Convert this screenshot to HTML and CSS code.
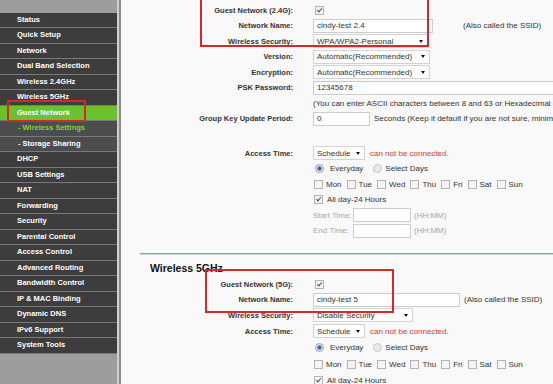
FILE: index.html
```html
<html lang="en">
<head>
    <meta charset="UTF-8">
    <meta name="viewport" content="width=device-width, initial-scale=1.0">
    <title>Guest Network</title>
    <link rel="stylesheet" href="styles.css">
</head>
<body>
  <div class="page">
    <nav class="menu">
      <ul>
        <li>Status</li>
        <li>Quick Setup</li>
        <li>Network</li>
        <li>Dual Band Selection</li>
        <li>Wireless 2.4GHz</li>
        <li>Wireless 5GHz</li>
        <li class="active">Guest Network</li>
        <li class="sub current">- Wireless Settings</li>
        <li class="sub">- Storage Sharing</li>
        <li>DHCP</li>
        <li>USB Settings</li>
        <li>NAT</li>
        <li>Forwarding</li>
        <li>Security</li>
        <li>Parental Control</li>
        <li>Access Control</li>
        <li>Advanced Routing</li>
        <li>Bandwidth Control</li>
        <li>IP &amp; MAC Binding</li>
        <li>Dynamic DNS</li>
        <li>IPv6 Support</li>
        <li>System Tools</li>
      </ul>
    </nav>
    <div class="edge"></div>

    <main class="content">
      <div class="row">
        <span class="label">Guest Network (2.4G):</span>
        <span class="value"><span class="check on first"></span></span>
      </div>
      <div class="row">
        <span class="label">Network Name:</span>
        <span class="value"><span class="input nameBox">cindy-test 2.4</span><span class="note">(Also called the SSID)</span></span>
      </div>
      <div class="row">
        <span class="label">Wireless Security:</span>
        <span class="value"><span class="select wpa">WPA/WPA2-Personal<i class="arrow"></i></span></span>
      </div>
      <div class="row">
        <span class="label">Version:</span>
        <span class="value"><span class="select auto">Automatic(Recommended)<i class="arrow"></i></span></span>
      </div>
      <div class="row">
        <span class="label">Encryption:</span>
        <span class="value"><span class="select auto">Automatic(Recommended)<i class="arrow"></i></span></span>
      </div>
      <div class="row">
        <span class="label">PSK Password:</span>
        <span class="value"><span class="input pskBox">12345678</span></span>
      </div>
      <div class="row">
        <span class="label"></span>
        <span class="value">(You can enter ASCII characters between 8 and 63 or Hexadecimal characters between 8 and 64.)</span>
      </div>
      <div class="row">
        <span class="label">Group Key Update Period:</span>
        <span class="value"><span class="input keyBox">0</span><span class="note near">Seconds (Keep it default if you are not sure, minimum is 30, 0 means no update)</span></span>
      </div>

      <div class="row spaced">
        <span class="label">Access Time:</span>
        <span class="value"><span class="select sched">Schedule<i class="arrow"></i></span><span class="warn">can not be connected.</span></span>
      </div>
      <div class="row">
        <span class="label"></span>
        <span class="value"><span class="radio on"></span>Everyday<span class="radio off"></span>Select Days</span>
      </div>
      <div class="row">
        <span class="label"></span>
        <span class="value days">
          <span><i class="check"></i>Mon</span>
          <span><i class="check"></i>Tue</span>
          <span><i class="check"></i>Wed</span>
          <span><i class="check"></i>Thu</span>
          <span><i class="check"></i>Fri</span>
          <span><i class="check"></i>Sat</span>
          <span><i class="check"></i>Sun</span>
        </span>
      </div>
      <div class="row">
        <span class="label"></span>
        <span class="value"><span class="check on"></span>All day-24 Hours</span>
      </div>
      <div class="row">
        <span class="label"></span>
        <span class="value muted"><span class="timeLabel">Start Time:</span><span class="input timeBox"></span>(HH:MM)</span>
      </div>
      <div class="row">
        <span class="label"></span>
        <span class="value muted"><span class="timeLabel">End Time:</span><span class="input timeBox"></span>(HH:MM)</span>
      </div>

      <div class="divider"></div>
      <h2>Wireless 5GHz</h2>

      <div class="row">
        <span class="label">Guest Network (5G):</span>
        <span class="value"><span class="check on first"></span></span>
      </div>
      <div class="row">
        <span class="label">Network Name:</span>
        <span class="value"><span class="input nameBox5">cindy-test 5</span><span class="note near">(Also called the SSID)</span></span>
      </div>
      <div class="row">
        <span class="label">Wireless Security:</span>
        <span class="value"><span class="select disable">Disable Security<i class="arrow"></i></span></span>
      </div>
      <div class="row tall">
        <span class="label">Access Time:</span>
        <span class="value"><span class="select sched">Schedule<i class="arrow"></i></span><span class="warn">can not be connected.</span></span>
      </div>
      <div class="row tall">
        <span class="label"></span>
        <span class="value"><span class="radio on"></span>Everyday<span class="radio off"></span>Select Days</span>
      </div>
      <div class="row tall">
        <span class="label"></span>
        <span class="value days">
          <span><i class="check"></i>Mon</span>
          <span><i class="check"></i>Tue</span>
          <span><i class="check"></i>Wed</span>
          <span><i class="check"></i>Thu</span>
          <span><i class="check"></i>Fri</span>
          <span><i class="check"></i>Sat</span>
          <span><i class="check"></i>Sun</span>
        </span>
      </div>
      <div class="row tall">
        <span class="label"></span>
        <span class="value"><span class="check on"></span>All day-24 Hours</span>
      </div>
    </main>

    <div class="mark markTop"></div>
    <div class="mark markBottom"></div>
    <div class="mark markMenu"></div>
  </div>
</body>
</html>
```

FILE: styles.css
```css
body {
  margin: 0;
  overflow: hidden;
  background-color: #f9f9f9;
  font-family: "Liberation Sans", Arial, sans-serif;
}

.page {
  position: relative;
  display: flex;
  width: 553px;
  height: 384px;
  overflow: hidden;
}

/* left menu */

.menu {
  width: 117px;
  flex-shrink: 0;
  background-color: #9d9d9d;
  padding-top: 12.5px;
}

.menu ul {
  list-style: none;
  margin: 0;
  padding: 0;
}

.menu li {
  height: 14.5px;
  line-height: 14.5px;
  border-bottom: 1px solid #7a7a7a;
  background-color: #3d3d3d;
  color: #ffffff;
  font-size: 7.5px;
  font-weight: 700;
  padding-left: 17px;
  white-space: nowrap;
}

.menu li.active {
  background-color: #6cc12f;
}

.menu li.sub {
  background-color: #4c4c4c;
  padding-left: 18px;
}

.menu li.current {
  color: #7fd63d;
}

.edge {
  width: 2px;
  flex-shrink: 0;
  background-color: #cfcfcf;
  border-right: 2px solid #8b8b8b;
}

/* form */

.content {
  flex: 1;
  padding-top: 2.5px;
  color: #333333;
  font-size: 8px;
  min-width: 0;
}

.row {
  display: grid;
  grid-template-columns: 172px 1fr;
  column-gap: 20px;
  height: 15.5px;
  align-items: center;
}

.row.spaced {
  margin-top: 19px;
}

.row.tall {
  height: 16.5px;
}

.label {
  text-align: right;
  font-size: 7.5px;
  font-weight: 700;
  white-space: nowrap;
}

.value {
  display: flex;
  align-items: center;
  white-space: nowrap;
  min-width: 0;
}

.input {
  display: inline-block;
  box-sizing: border-box;
  height: 14px;
  line-height: 12px;
  padding-left: 3px;
  border: 1px solid #cdcdcd;
  background-color: #ffffff;
  flex-shrink: 0;
}

.nameBox { width: 120px; }
.nameBox5 { width: 147px; }
.pskBox { width: 260px; border-top-color: #b4cbe0; }
.keyBox { width: 57px; }
.timeBox { width: 58px; margin-right: 3px; }

.note {
  margin-left: 30px;
}

.note.near {
  margin-left: 4px;
}

.select {
  display: inline-flex;
  align-items: center;
  justify-content: space-between;
  box-sizing: border-box;
  height: 14px;
  padding: 0 4px 0 3px;
  border: 1px solid #d3d3d3;
  background-color: #ffffff;
  flex-shrink: 0;
}

.wpa { width: 115px; }
.auto { width: 117px; }
.sched { width: 52px; }
.disable { width: 100px; }

.arrow {
  display: inline-block;
  width: 0;
  height: 0;
  border-left: 2.5px solid transparent;
  border-right: 2.5px solid transparent;
  border-top: 3px solid #111111;
}

.warn {
  margin-left: 5px;
  color: #e0353a;
}

.check {
  display: inline-block;
  box-sizing: border-box;
  width: 9px;
  height: 9px;
  margin: 0 4px 0 1px;
  border: 1px solid #b3b3b3;
  background-color: #f4f4f4;
  flex-shrink: 0;
  position: relative;
}

.check.first {
  margin-left: 2px;
}

.check.on::after {
  content: "";
  position: absolute;
  left: 2px;
  top: 0px;
  width: 2px;
  height: 4px;
  border-right: 1.5px solid #3b5277;
  border-bottom: 1.5px solid #3b5277;
  transform: rotate(40deg);
}

.radio {
  display: inline-block;
  box-sizing: border-box;
  width: 9px;
  height: 9px;
  border-radius: 50%;
  border: 1px solid #c6c6c6;
  background-color: #e9e9e9;
  margin: 0 6px 0 2px;
  flex-shrink: 0;
}

.radio.on {
  background: radial-gradient(circle, #3d62a0 0, #3d62a0 1.8px, #dfe6ef 2.4px);
  border-color: #9aa3ae;
}

.radio.off {
  margin: 0 3px 0 10px;
}

.days span {
  display: inline-flex;
  align-items: center;
  margin-right: 4px;
}

.days .check {
  margin: 0 3px 0 1px;
}

.muted {
  color: #a8a8a8;
}

.timeLabel {
  width: 40px;
}

.divider {
  margin: 14px 0 0 19px;
  height: 1px;
  background-color: #8fa39b;
  border-bottom: 1px solid #c9d3cf;
}

h2 {
  margin: 7px 0 3px 29px;
  font-size: 10.5px;
  font-weight: 700;
  line-height: 12px;
  color: #111111;
}

/* red highlight boxes over the screenshot */

.mark {
  position: absolute;
  box-sizing: border-box;
  border: 2px solid #d7262c;
}

.markTop {
  left: 200px;
  top: -2px;
  width: 229px;
  height: 49px;
}

.markBottom {
  left: 205px;
  top: 269px;
  width: 189px;
  height: 44px;
}

.markMenu {
  left: 7px;
  top: 100px;
  width: 79px;
  height: 22px;
}
```
